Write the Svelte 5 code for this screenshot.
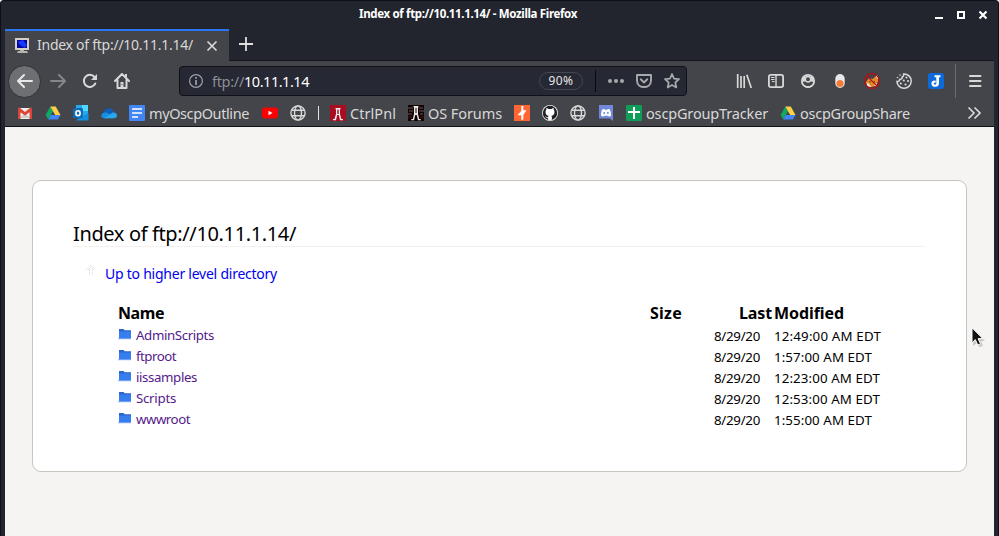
<script>
  // Spreads a label's letters so that it takes up the given width.
  function fit(node, width) {
    const natural = node.getBoundingClientRect().width;
    const count = node.textContent.length;
    node.style.letterSpacing = `${(width - natural) / count}px`;
  }

  const bookmarks = [
    { icon: 'gmail' },
    { icon: 'drive' },
    { icon: 'outlook' },
    { icon: 'cloud' },
    { icon: 'docs', label: 'myOscpOutline', text: 100, width: 133 },
    { icon: 'youtube' },
    { icon: 'globe' },
    { icon: 'bar', width: 12 },
    { icon: 'ctrl', label: 'CtrlPnl', text: 46, width: 78 },
    { icon: 'forum', label: 'OS Forums', text: 74, width: 106 },
    { icon: 'burp' },
    { icon: 'github' },
    { icon: 'globe' },
    { icon: 'discord' },
    { icon: 'sheets', label: 'oscpGroupTracker', text: 122, width: 154 },
    { icon: 'drive', label: 'oscpGroupShare', text: 110, width: 142 }
  ];

  const tools = ['library', 'sidebar', 'account', 'toggle', 'fox', 'cookie', 'joplin'];

  const rows = [
    { name: 'AdminScripts', width: 78, time: '12:49:00 AM EDT', tw: 107 },
    { name: 'ftproot', width: 40, time: '1:57:00 AM EDT', tw: 98 },
    { name: 'iissamples', width: 61, time: '12:23:00 AM EDT', tw: 106 },
    { name: 'Scripts', width: 40, time: '12:53:00 AM EDT', tw: 106 },
    { name: 'wwwroot', width: 54, time: '1:55:00 AM EDT', tw: 98 }
  ];
</script>

{#snippet icon(name)}
  <svg class="icon" viewBox="0 0 16 16" width="16" height="16">
    {#if name === 'gmail'}
      <path fill="#eee" d="M2 3h12v11H2z" />
      <path fill="#ccc" d="M3 13l5-5 5 5z" />
      <path fill="#db4437" d="M1 4c0-1 1-2 2-1l5 4 5-4c1-1 2 0 2 1v10h-2.500V7.300L8 10.500 3.500 7.300V14H1z" />
    {:else if name === 'drive'}
      <path fill="#11a861" d="M5.300 1.500L.6 10l2.600 4.500L8 6.200z" />
      <path fill="#ffcf48" d="M5.300 1.500h5.400l4.800 8.500h-5.300z" />
      <path fill="#4285f4" d="M5.800 10h9.700l-2.600 4.500H3.200z" />
    {:else if name === 'outlook'}
      <path fill="#28a8ea" d="M3 0h12v13H3z" />
      <path fill="#50d9ff" d="M9 0h6v6H9z" />
      <path fill="#0b5fa8" d="M4 3h5v5H4z" />
      <path fill="#1490df" d="M3 15l12.500-7v7.500H4z" />
      <path fill="#0f6cbd" d="M0 3.500h10v9.500H0z" />
      <ellipse cx="5" cy="8.200" rx="2.100" ry="2.400" fill="none" stroke="#fff" stroke-width="1.600" />
    {:else if name === 'cloud'}
      <path fill="#0f5fb8" d="M2 8.500C3 5 6 2.500 9 3.300c2 .4 3.500 2 4 4.200L6 12z" />
      <path fill="#1490df" d="M3 13.300C-.5 13.300-.7 8.500 3 7.800c2-.6 3.600.2 5 1.200l4 4.300z" />
      <path fill="#28a8ea" d="M3 13.300L11 8c2-1.300 5 .2 5 2.500 0 1.700-1.200 2.800-2.700 2.800z" />
    {:else if name === 'docs'}
      <rect width="16" height="16" rx="1" fill="#4285f4" />
      <path stroke="#fff" stroke-width="1.700" d="M3 4h10M3 8h10M3 12h6" />
    {:else if name === 'youtube'}
      <rect x="0" y="2.500" width="16" height="11" rx="2.700" fill="#f00" />
      <path fill="#fff" d="M6.500 5.800l4 2.200-4 2.200z" />
    {:else if name === 'globe'}
      <g fill="none" stroke="#d8d8d8" stroke-width="1.400">
        <circle cx="8" cy="8" r="7.100" />
        <ellipse cx="8" cy="8" rx="3.500" ry="7.100" />
        <path d="M1.800 5.200h12.400M1.800 10.800h12.400" />
      </g>
    {:else if name === 'bar'}
      <path fill="#e4e4e4" d="M7 1h1v14H7z" />
    {:else if name === 'ctrl'}
      <path fill="#a90e20" d="M0 0h16v16H0z" />
      <path fill="#f2ecec" d="M5.500 3h5v1.300H10V9l1.300 5H13v1.300h-3L8.800 10H7.200L6 15.300H3V14h1.500L6 9V4.300h-.5z" />
      <path fill="#a90e20" d="M7.300 4.500h1.400V9H7.300z" />
    {:else if name === 'forum'}
      <path fill="#120404" d="M0 0h16v16H0z" />
      <path stroke="#655" stroke-width="1" d="M0 3h5M1 6h4M0 9h4M11 3h4M11 6h5M12 9h3" />
      <path stroke="#501010" d="M0 12h4M12 12h4" />
      <path fill="#e9e4e0" d="M5.500 1h5v1.300H10V9l1.200 5h1.500v1.300H10L8.700 10H7.300L6 15.300H3.300V14h1.500L6 9V2.300h-.5z" />
      <path fill="#120404" d="M7.500 3h1v5h-1z" />
    {:else if name === 'burp'}
      <path fill="#ff6633" d="M0 0h16v16H0z" />
      <path fill="#fff" d="M7.300 1h2v4.300h3.200L9.300 10v4.700h-2v-4.500H3.500L7.300 6z" />
    {:else if name === 'github'}
      <circle cx="8" cy="8" r="8" fill="#e9e9e9" />
      <circle cx="8" cy="8" r="7.200" fill="#202126" />
      <path fill="#fff" d="M3.500 7c0-1 .3-1.700.8-2.300l.1-2L6.500 4h3l2.100-1.300.1 2c.5.600.8 1.300.8 2.300 0 2.500-1.300 3.500-3.200 3.800.4.500.6 1 .6 1.700v2.300c-1.200.5-2.600.5-3.800 0v-1.700c-1.500.3-2-.5-2.600-1.500l-.8-.6c1.300-.3 1.800 1.300 2.500 1.300.4 0 .9-.1.900-.1 0-.6.200-1 .5-1.400C4.800 10.500 3.500 9.500 3.500 7z" />
    {:else if name === 'discord'}
      <path fill="#7289da" d="M1 0h14v16l-3-2.600H1z" />
      <path fill="#fff" d="M3 10.500c0-3 .8-5.300 1.300-6C5.500 3.800 6.300 4 6.300 4l.5.700h2.500L9.800 4s.8-.1 2 .5c.6 1 1.300 3.200 1.300 6-.8.900-1.600 1-2.400 1l-.6-.8H6l-.6.800s-1.500 0-2.400-1z" />
      <circle cx="6.200" cy="7.900" r="1" fill="#7289da" />
      <circle cx="9.900" cy="7.900" r="1" fill="#7289da" />
    {:else if name === 'sheets'}
      <rect width="16" height="16" rx="1" fill="#0f9d58" />
      <path fill="#fff" d="M7 2h2v4h5v2H9v6H7V8H2V6h5z" />
    {:else if name === 'library'}
      <path stroke="#d8d8d8" stroke-width="1.700" d="M1.700 1v14M5 3v12M8.200 3v12M10.800 1.700L15.300 15" />
    {:else if name === 'sidebar'}
      <rect x=".9" y="1.900" width="14.200" height="12.200" rx="1.800" fill="none" stroke="#d8d8d8" stroke-width="1.800" />
      <path stroke="#d8d8d8" stroke-width="1.400" d="M8 2v12" />
      <path stroke="#d8d8d8" d="M3 4.500h3.500M3 6.500h3.500M4 8.500h2.500" />
    {:else if name === 'account'}
      <circle cx="8" cy="8" r="6.200" fill="none" stroke="#d8d8d8" stroke-width="1.800" />
      <circle cx="8" cy="6.300" r="2.700" fill="none" stroke="#d8d8d8" stroke-width="1.500" />
      <path fill="#d8d8d8" d="M2.500 4L5 3.500v5L2.500 9zM13.500 4L11 3.500v5l2.500.5z" />
      <path fill="none" stroke="#d8d8d8" stroke-width="1.500" d="M5 13.300c2 .8 4 .8 6 0" />
    {:else if name === 'toggle'}
      <rect x="3.300" y="1" width="9.400" height="14" rx="4.700" fill="#e9e9eb" />
      <circle cx="8" cy="10.500" r="3.500" fill="#f47a35" />
    {:else if name === 'fox'}
      <path fill="#e08a2c" d="M2 9l3-4 3.500 1L13 2.500l1.200 5-2 5-4.500 1.500-4.500-1.500z" />
      <path fill="#f7e8d8" d="M2.500 9.500l2 1 3 3.500-4-.500zM10 12l3-2-1.500 3.500zM11.800 3.500L13.600 2l.6 4.500z" />
      <path fill="#583820" d="M5 8l2 .500-1 1.300zM9 9l2-1v1.500z" />
      <circle cx="8" cy="8" r="7.300" fill="none" stroke="#c40808" stroke-width="1.200" />
      <path stroke="#c40808" stroke-width="1.200" d="M2.900 2.900l10.200 10.200" />
    {:else if name === 'cookie'}
      <path fill="none" stroke="#d8d8d8" stroke-width="1.500" stroke-linejoin="round" d="M7.500 1C12 .7 15.200 4 15.200 8s-3 7.200-7.200 7.200S1 12 .9 8.300C2.500 9 3.800 8 3.700 6.300 5.500 6.500 6.500 5.500 6 4 7.500 3.500 8 2.500 7.500 1z" />
      <g fill="#d8d8d8">
        <circle cx="10.500" cy="4.500" r="1.100" /><circle cx="7.800" cy="7.500" r="1.100" />
        <circle cx="12" cy="8" r="1.100" /><circle cx="4.800" cy="10.500" r="1.100" />
        <circle cx="9.500" cy="11.500" r="1.100" />
        <circle cx="1.500" cy="4.500" r=".8" /><circle cx="4" cy="2" r=".8" />
      </g>
    {:else if name === 'joplin'}
      <rect width="16" height="16" rx="2.500" fill="#0b6ad8" />
      <path fill="#fff" d="M6.500 2.300h6v1.900h-1.500v6c0 2.300-1.500 3.600-3.700 3.600-2.300 0-3.900-1.300-3.900-3.400 0-2.200 2-3.300 4.300-2.700v2.100c-1.200-.3-2 0-2 .8 0 .6.500 1 1.200 1 .9 0 1.400-.5 1.400-1.400v-6H6.500z" />
    {/if}
  </svg>
{/snippet}

<div class="window">
  <header class="titlebar">
    <div class="title"><span use:fit={218}>Index of ftp://10.11.1.14/ - Mozilla Firefox</span></div>
    <svg class="controls" width="54" height="12" viewBox="0 0 54 12">
      <path fill="#fff" d="M0 9h8v2H0z" />
      <path fill="none" stroke="#fff" stroke-width="2" d="M23 4h6v6h-6z" />
      <path stroke="#fff" stroke-width="2.200" d="M44.500 3.500l7 7M51.500 3.500l-7 7" />
    </svg>
  </header>

  <div class="browser">
    <div class="tabs">
      <div class="tab">
        <svg width="16" height="18" viewBox="0 0 16 18">
          <path fill="#d4d0c8" d="M1 1h14v12H1z" />
          <path fill="#0505a0" d="M3 3h10v8H3z" />
          <path fill="#1838ff" d="M4 5l5-2 4 5-2 3-5-3z" />
          <path fill="#b8b4ac" d="M6 13h4v1h3l1 2H3l1-2h2z" />
        </svg>
        <div class="tab-title"><span use:fit={156}>Index of ftp://10.11.1.14/</span></div>
        <svg width="12" height="12" viewBox="0 0 12 12">
          <path stroke="#d8d8d8" stroke-width="1.700" d="M1.500 1.500l9 9M10.500 1.500l-9 9" />
        </svg>
      </div>
      <svg class="plus" width="14" height="14" viewBox="0 0 14 14">
        <path stroke="#e0e0e0" stroke-width="1.800" d="M7 0v14M0 7h14" />
      </svg>
    </div>

    <div class="navbar">
      <div class="cell back">
        <svg width="16" height="16" viewBox="0 0 16 16">
          <path fill="none" stroke="#e8e8e8" stroke-width="2" stroke-linecap="round" stroke-linejoin="round" d="M15 8H1.500M7 2L1 8l6 6" />
        </svg>
      </div>
      <div class="cell">
        <svg width="16" height="16" viewBox="0 0 16 16">
          <path fill="none" stroke="#85868a" stroke-width="2" stroke-linecap="round" stroke-linejoin="round" d="M1 8h13.500M9 2l6 6-6 6" />
        </svg>
      </div>
      <div class="cell">
        <svg width="16" height="16" viewBox="0 0 16 16">
          <path fill="none" stroke="#d8d8d8" stroke-width="2" stroke-linecap="round" d="M13.300 10.500A6 6 0 1 1 12.500 4" />
          <path fill="#d8d8d8" d="M15 1v6H9z" />
        </svg>
      </div>
      <div class="cell">
        <svg width="16" height="16" viewBox="0 0 16 16">
          <path fill="none" stroke="#d8d8d8" stroke-width="2" stroke-linecap="round" stroke-linejoin="round" d="M1 8l7-7 7 7M3.500 7v8h9V7" />
          <path fill="#d8d8d8" d="M6.500 9h3v6h-3zM11 1h2v4l-2-2z" />
          <path fill="#43454a" d="M7.500 11h1v1h-1z" />
        </svg>
      </div>

      <div class="urlbar">
        <svg width="16" height="16" viewBox="0 0 16 16">
          <circle cx="8" cy="8" r="6.400" fill="none" stroke="#a0a1a5" stroke-width="1.200" />
          <path fill="#a0a1a5" d="M7.200 4h1.700v1.700H7.200zM7.200 7h1.700v5H7.200z" />
        </svg>
        <div class="url"><span class="scheme" use:fit={32}>ftp://</span><span use:fit={65}>10.11.1.14</span></div>
        <div class="zoom"><span use:fit={25}>90%</span></div>
        <div class="divider"></div>
        <svg width="16" height="16" viewBox="0 0 16 16">
          <g fill="#a8a9ac"><circle cx="2" cy="8" r="2" /><circle cx="8" cy="8" r="2" /><circle cx="14" cy="8" r="2" /></g>
        </svg>
        <svg width="16" height="16" viewBox="0 0 16 16">
          <path fill="none" stroke="#a8a9ac" stroke-width="1.900" stroke-linejoin="round" d="M1 2h14v5.500c0 8.700-14 8.700-14 0z" />
          <path fill="none" stroke="#a8a9ac" stroke-width="1.900" stroke-linecap="round" stroke-linejoin="round" d="M4.700 6.300L8 9.500l3.300-3.200" />
        </svg>
        <svg width="16" height="16" viewBox="0 0 16 16">
          <path fill="none" stroke="#a8a9ac" stroke-width="1.700" stroke-linejoin="round" d="M8 1l2 4.600 5 .5-3.700 3.400 1 5L8 12l-4.300 2.500 1-5L1 6.100l5-.5z" />
        </svg>
      </div>

      <div class="tools">
        {#each tools as tool}
          <div class="cell">{@render icon(tool)}</div>
        {/each}
        <div class="rule"></div>
        <div class="cell">
          <svg width="16" height="16" viewBox="0 0 16 16">
            <path stroke="#d8d8d8" stroke-width="2" stroke-linecap="round" d="M3 3h10.500M3 8h10.500M3 13h10.500" />
          </svg>
        </div>
      </div>
    </div>

    <div class="bookmarks">
      {#each bookmarks as item}
        <div class="bookmark" class:narrow={item.icon === 'bar'} style:width="{item.width ?? 28}px">
          {@render icon(item.icon)}
          {#if item.label}<span use:fit={item.text}>{item.label}</span>{/if}
        </div>
      {/each}
      <svg class="more" width="14" height="14" viewBox="0 0 14 14">
        <path fill="none" stroke="#d8d8d8" stroke-width="1.700" d="M1.500 1.500L7 7l-5.500 5.500M7.500 1.500L13 7l-5.500 5.500" />
      </svg>
    </div>

    <main>
      <section class="card">
        <h1><span use:fit={223}>Index of ftp://10.11.1.14/</span></h1>
        <div class="up">
          <svg width="12" height="12" viewBox="0 0 12 12">
            <path fill="none" stroke="#e6e6e6" d="M1 6l5-5 5 5M4.500 5v6M7.500 5v6M3 6l3-3 3 3" stroke-dasharray="2 .7" />
          </svg>
          <a href="#up"><span use:fit={172}>Up to higher level directory</span></a>
        </div>
        <div class="listing">
          <div class="row head">
            <div><span use:fit={46}>Name</span></div>
            <div><span use:fit={32}>Size</span></div>
            <div class="last"><span use:fit={33}>Last</span></div>
            <div><span use:fit={70}>Modified</span></div>
          </div>
          {#each rows as row}
            <div class="row">
              <div class="file">
                <svg width="14" height="12" viewBox="0 0 14 12">
                  <path fill="#a9c6f8" d="M0 10h13v1.300H0z" />
                  <path fill="#2b66cb" d="M1 1h4.500l1.200 1.300H13V6H1z" />
                  <path fill="#367df0" d="M1 3.500h12v7H1z" />
                </svg>
                <a href="#{row.name}"><span use:fit={row.width}>{row.name}</span></a>
              </div>
              <div></div>
              <div class="when"><span use:fit={46}>8/29/20</span></div>
              <div class="when"><span use:fit={row.tw}>{row.time}</span></div>
            </div>
          {/each}
        </div>
      </section>
    </main>
  </div>
  <svg class="cursor" width="15" height="21" viewBox="0 0 15 21">
    <path fill="#aaa" opacity=".6" d="M2 2v17l4-3 2 4 4-1-2-5h4z" />
    <path fill="#111" stroke="#fff" stroke-width="1" d="M1 .8v15l3.300-3.200 2.500 5.500 2.700-1.200-2.400-5.300h4.700z" />
  </svg>
</div>

<style>
  :global(body) { background: #fff; overflow: hidden; }
  .window {
    position: relative;
    box-sizing: border-box;
    width: 999px;
    height: 536px;
    padding: 0 4px;
    border: 1px solid #0e1016;
    border-bottom: 0;
    border-radius: 4px 4px 0 0;
    background: #23252e;
    color: #d8d8d8;
    font: 14.500px/20px "Noto Sans", "Open Sans", sans-serif;
    white-space: nowrap;
    overflow: hidden;
  }
  svg { display: block; flex: none; }
  span { display: inline-block; }
  .titlebar { height: 28px; display: flex; align-items: center; justify-content: flex-end; }
  .title { width: 218px; margin-right: 358px; color: #fff; font-size: 11.500px; font-weight: 700; padding-bottom: 2px; }
  .controls { margin-right: 5px; margin-bottom: 3px; }
  .tabs { height: 31px; display: flex; align-items: center; border-bottom: 1px solid #14151b; }
  .tab {
    box-sizing: border-box;
    width: 224px;
    height: 32px;
    margin-bottom: -1px;
    padding: 0 11px 0 9px;
    display: flex;
    align-items: center;
    border-top: 2px solid #2a76f5;
    background: #43454a;
    font-size: 14px;
  }
  .tab-title { width: 169px; margin-left: 7px; padding-bottom: 3px; }
  .plus { margin-left: 10px; margin-top: -1px; }
  .navbar { height: 40px; display: flex; align-items: center; background: #43454a; padding-left: 3px; }
  .cell { width: 32px; height: 32px; display: grid; place-items: center; }
  .back { box-sizing: border-box; width: 33px; height: 33px; margin-right: 1px; border: 1px solid #303136; border-radius: 50%; background: #6e6f73; }
  .urlbar {
    box-sizing: border-box;
    width: 508px;
    height: 30px;
    margin-left: 41px;
    padding: 0 6px 0 8px;
    display: flex;
    align-items: center;
    gap: 12px;
    border: 1px solid #101117;
    border-radius: 4px;
    background: #262833;
  }
  .url { margin-left: -4px; padding-bottom: 1px; flex: 1; color: #fff; }
  .scheme { color: #8d8e94; }
  .zoom {
    box-sizing: border-box;
    width: 44px;
    height: 18px;
    border: 1px solid #45474f;
    border-radius: 9px;
    color: #e6e6e6;
    font-size: 12px;
    line-height: 16px;
    text-align: center;
  }
  .divider { width: 1px; height: 22px; background: #090a0e; }
  .tools { display: flex; align-items: center; margin-left: 41px; }
  .rule { width: 1px; height: 34px; margin: 0 3px; background: #6b6c70; }
  .bookmarks { box-sizing: border-box; height: 26px; display: flex; align-items: center; background: #43454a; padding: 0 13px 1px 6px; border-bottom: 1px solid #101116; }
  .bookmark { box-sizing: border-box; padding-left: 6px; display: flex; gap: 4px; align-items: center; }
  .bookmark span { margin-top: -1px; }
  .narrow { padding-left: 0; margin-left: -1px; margin-right: 1px; overflow: hidden; }
  .more { margin-left: auto; }
  main { height: 409px; padding: 53px 27px 0; background: #f5f4f2; }
  .card {
    box-sizing: border-box;
    height: 292px;
    padding: 38px 41px 0 40px;
    border: 1px solid #c9c4bd;
    border-radius: 9px;
    background: #fff;
    color: #000;
  }
  h1 { margin: 0; height: 27px; border-bottom: 1px solid #f2f1ef; font-size: 20px; font-weight: 400; line-height: 29px; }
  .up { display: flex; align-items: center; margin: 17px 0 0 12px; font-size: 14px; gap: 8px; }
  .up svg { margin-top: -8px; }
  a { color: #0000ee; text-decoration: none; }
  .listing { margin: 17px 0 0 45px; }
  .row { height: 21px; display: grid; grid-template-columns: 532px 64px 60px auto; align-items: center; font-size: 13.300px; }
  .head { height: 23px; font-size: 16px; font-weight: 700; }
  .last { padding-left: 25px; }
  .file { display: flex; gap: 4px; align-items: center; }
  .file svg { margin-top: -1px; }
  .file a { color: #551a8b; }
  .when { margin-bottom: -2px; }
  .cursor { position: absolute; left: 970px; top: 326px; }
</style>
